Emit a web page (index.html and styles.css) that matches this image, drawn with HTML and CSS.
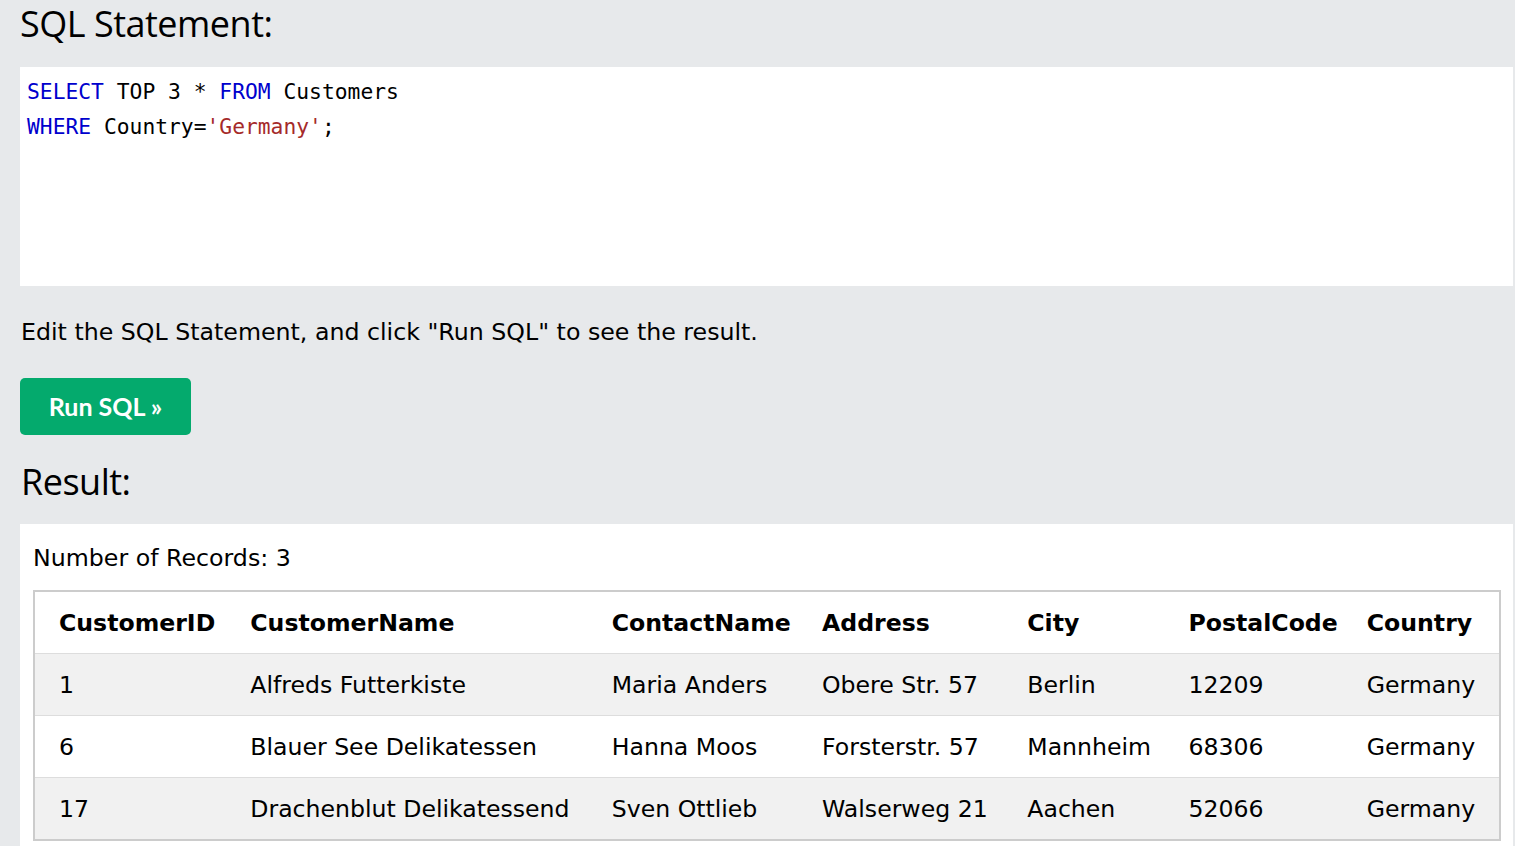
FILE: index.html
```html
<!DOCTYPE html>
<html>
<head>
<meta charset="utf-8">
<link rel="stylesheet" href="styles.css">
</head>
<body>
<div class="page">
  <h2 class="heading">SQL Statement:</h2>
  <div class="code">
    <div class="line"><span class="kw">SELECT</span> TOP 3 * <span class="kw">FROM</span> Customers</div>
    <div class="line"><span class="kw">WHERE</span> Country=<span class="str">'Germany'</span>;</div>
  </div>
  <p class="hint">Edit the SQL Statement, and click "Run SQL" to see the result.</p>
  <button class="run">Run SQL »</button>
  <h2 class="heading result-heading">Result:</h2>
  <div class="result">
    <div class="count">Number of Records: 3</div>
    <table class="grid">
      <colgroup>
        <col class="c1"><col class="c2"><col class="c3"><col class="c4"><col class="c5"><col class="c6"><col class="c7">
      </colgroup>
      <thead>
        <tr><th>CustomerID</th><th>CustomerName</th><th>ContactName</th><th>Address</th><th>City</th><th>PostalCode</th><th>Country</th></tr>
      </thead>
      <tbody>
        <tr><td>1</td><td>Alfreds Futterkiste</td><td>Maria Anders</td><td>Obere Str. 57</td><td>Berlin</td><td>12209</td><td>Germany</td></tr>
        <tr><td>6</td><td>Blauer See Delikatessen</td><td>Hanna Moos</td><td>Forsterstr. 57</td><td>Mannheim</td><td>68306</td><td>Germany</td></tr>
        <tr><td>17</td><td>Drachenblut Delikatessend</td><td>Sven Ottlieb</td><td>Walserweg 21</td><td>Aachen</td><td>52066</td><td>Germany</td></tr>
      </tbody>
    </table>
  </div>
</div>
</body>
</html>
```
FILE: styles.css
```css
html, body {
  margin: 0;
  padding: 0;
  background: #e7e9eb;
  overflow: hidden;
}
.page {
  padding: 0 2px 0 20px;
  font-family: "DejaVu Sans", Verdana, sans-serif;
  color: #000;
}
.heading {
  margin: 0 0 19px 0;
  font-family: "Open Sans", "Noto Sans", sans-serif;
  font-weight: 400;
  font-size: 36px;
  line-height: 48px;
  letter-spacing: -0.5px;
}
.code {
  background: #fff;
  height: 219px;
  box-sizing: border-box;
  padding: 7px 7px;
  font-family: "DejaVu Sans Mono", "Liberation Mono", monospace;
  font-size: 21.3px;
  line-height: 35px;
}
.line { white-space: pre; }
.kw { color: #0000cd; }
.str { color: #a52a2a; }
.hint {
  margin: 31px 0 31px 1px;
  font-size: 23.7px;
  line-height: 30px;
}
.run {
  display: block;
  width: 171px;
  height: 57px;
  border: 0;
  border-radius: 5px;
  background: #04aa6d;
  color: #fff;
  font-family: Lato, "Open Sans", sans-serif;
  font-weight: 700;
  font-size: 25px;
  padding: 0 0 2px 0;
}
.result-heading {
  margin: 23px 0 18px 1px;
}
.result {
  background: #fff;
  padding: 19px 12px 20px 13px;
}
.count {
  font-size: 23.7px;
  line-height: 30px;
  margin-bottom: 17px;
}
.grid {
  width: 100%;
  table-layout: fixed;
  border-collapse: collapse;
  border: 2px solid #cccccc;
  font-size: 23.6px;
}
.c1 { width: 204px; }
.c2 { width: 361px; }
.c3 { width: 210px; }
.c4 { width: 205px; }
.c5 { width: 161px; }
.c6 { width: 178px; }
.c7 { width: 145px; }
.grid th, .grid td {
  text-align: left;
  padding: 17px 4px 15px 12px;
  line-height: 29px;
  white-space: nowrap;
  border-bottom: 1px solid #dddddd;
}
.grid th:first-child, .grid td:first-child {
  padding-left: 24px;
}
.grid th {
  font-weight: 700;
  background: #fff;
}
.grid tbody tr:nth-child(odd) td { background: #f1f1f1; }
.grid tbody tr:nth-child(even) td { background: #fff; }
```
